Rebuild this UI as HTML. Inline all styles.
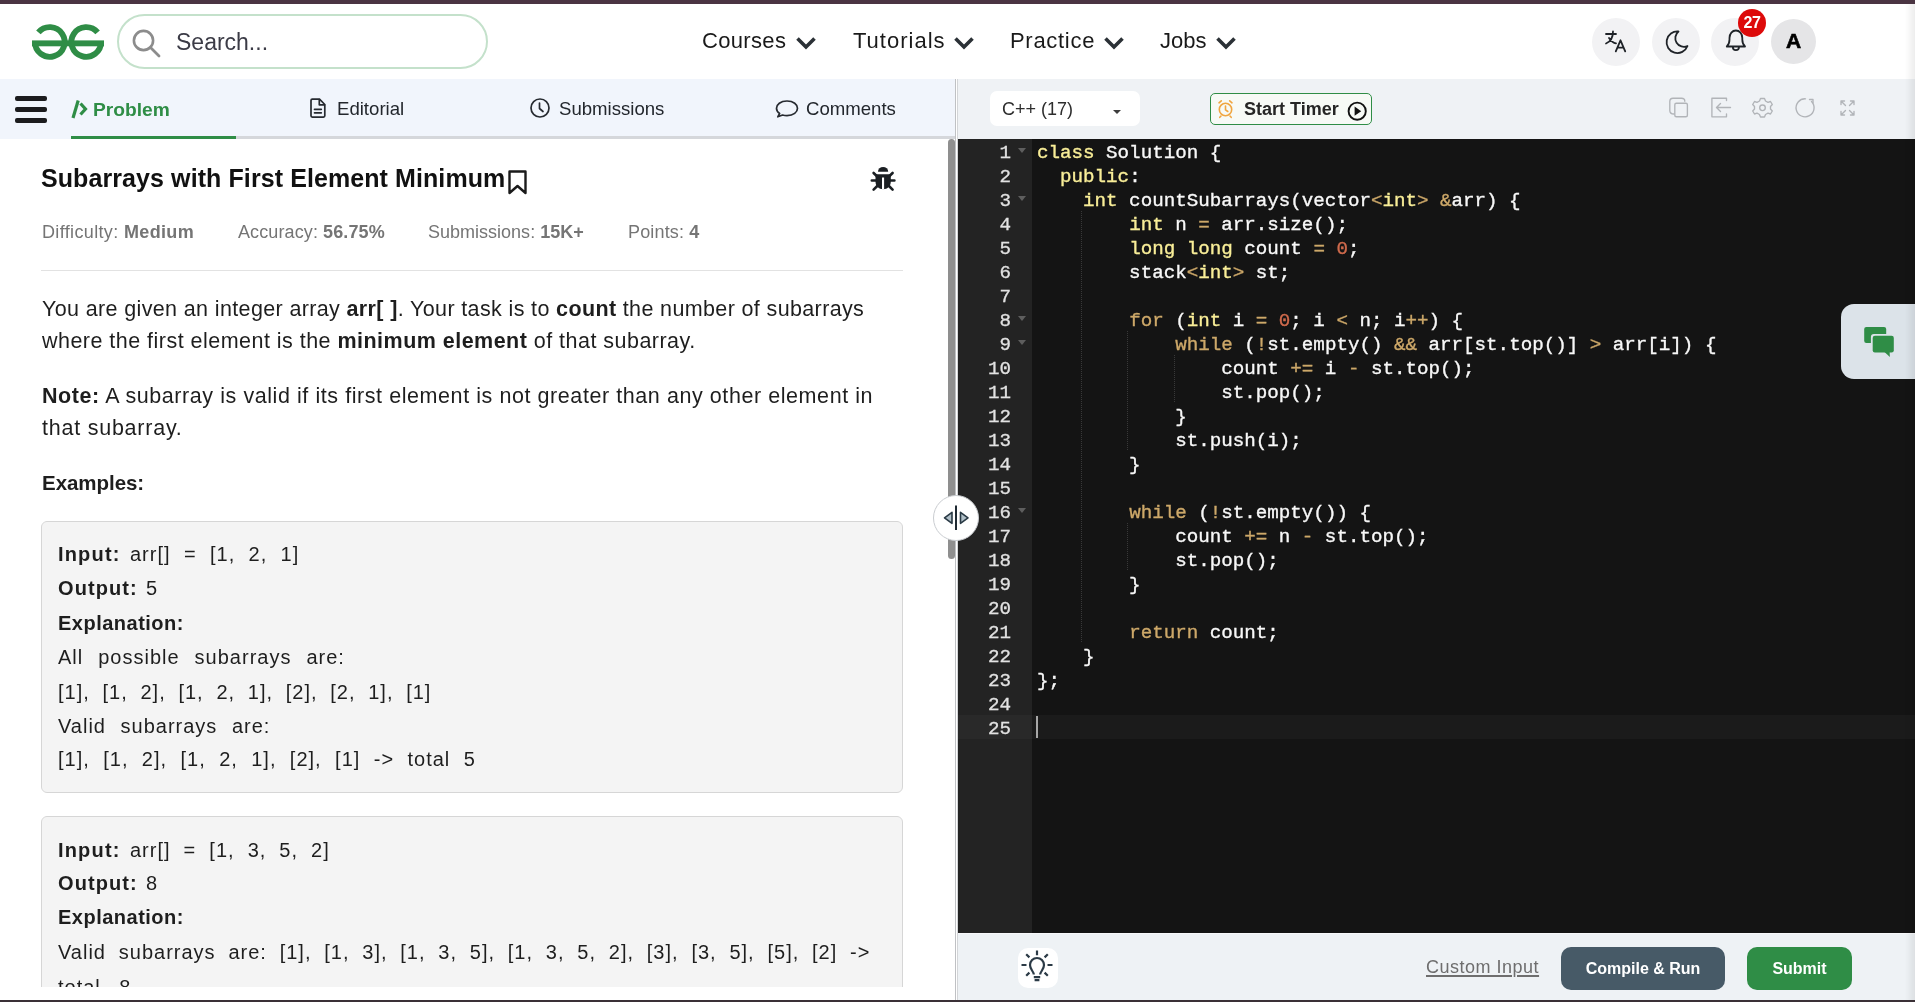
<!DOCTYPE html>
<html><head><meta charset="utf-8">
<style>
*{box-sizing:border-box;margin:0;padding:0}
html,body{width:1915px;height:1002px;overflow:hidden;background:#fff;font-family:"Liberation Sans",sans-serif;color:#1e1e1e}
.abs{position:absolute}
div{will-change:transform}
#topbar{position:absolute;left:0;top:0;width:1915px;height:4px;background:#4a3442}
#header{position:absolute;left:0;top:4px;width:1915px;height:75px;background:#fff}
#search{position:absolute;left:116.5px;top:14px;width:371px;height:55px;border:2.8px solid #c4e1cb;border-radius:28px}
#search .t{position:absolute;left:57px;top:13px;font-size:23px;color:#3b3b46}
.nav{position:absolute;top:28px;font-size:22px;color:#1a1a1a}
.circ{position:absolute;width:48px;height:48px;border-radius:50%;background:#f2f2f4}
/* left tabs */
#ltabs{position:absolute;left:0;top:79px;width:955px;height:60px;background:#f1f5fc}
#ltabs .line{position:absolute;left:71px;top:57px;width:884px;height:3px;background:#d5d7db}
#ltabs .act{position:absolute;left:71px;top:57px;width:165px;height:3px;background:#2f8d46}
.tab{position:absolute;top:18px;font-size:19px;color:#262a30}
/* divider */
#divider{position:absolute;left:955px;top:79px;width:3px;height:923px;background:#fff}
#divider .g{position:absolute;left:0;top:0;width:1px;height:100%;background:#bfc1c4}
#lscroll{position:absolute;left:948px;top:139px;width:7px;height:420px;background:#8f8f8f;border-radius:4px}
/* right toolbar */
#rtool{position:absolute;left:958px;top:79px;width:957px;height:60px;background:#eff2f5}
#sel{position:absolute;left:32px;top:12px;width:150px;height:35px;background:#fff;border-radius:7px}
#timer{position:absolute;left:252px;top:14px;width:162px;height:32px;border:1.2px solid #2f8d46;border-radius:5px;background:#f7faf6}
/* editor */
#editor{position:absolute;left:958px;top:139px;width:957px;height:794px;background:#141414;overflow:hidden}

#gutter{position:absolute;left:0;top:0;width:74px;height:794px;background:#232323}
.ln{position:relative;height:24px;line-height:24px;padding-top:1.5px;text-align:right;padding-right:21px;font-family:"Liberation Mono",monospace;font-size:19.2px;color:#e2e2e2;-webkit-text-stroke:0.3px currentColor}
.fold{position:absolute;left:60px;top:9px;width:0;height:0;border-left:4px solid transparent;border-right:4px solid transparent;border-top:5px solid #5e5e5e}
#code{position:absolute;left:78.5px;top:0;font-family:"Liberation Mono",monospace;font-size:19.2px;color:#f8f8f8;white-space:pre;-webkit-text-stroke:0.35px currentColor}
.cl{height:24px;line-height:24px;padding-top:1.5px}
#activeline{position:absolute;left:0;top:576px;width:957px;height:24px;background:rgba(255,255,255,0.031);z-index:2}
#cursor{position:absolute;left:78px;top:577px;width:2px;height:22px;background:#a7a7a7;z-index:3}
.ig{position:absolute;width:1px;background:repeating-linear-gradient(to bottom,rgba(255,255,255,0.16) 0 1px,transparent 1px 2px)}
.k{color:#cda869}.s{color:#f9ee98}.n{color:#cf6a4c}
/* bottom bar */
#bbar{position:absolute;left:958px;top:933px;width:957px;height:67px;background:#eef2f5}
#bottomline{position:absolute;left:0;top:1000px;width:1915px;height:2px;background:#3a3036}

.L{position:absolute;white-space:pre;line-height:30px;height:30px;color:#1e1e1e}
#lpane{position:absolute;left:0;top:139px;width:948px;height:848px;overflow:hidden;background:#fff}
#lcontent{position:absolute;left:0;top:-139px;width:948px;height:1200px}
.box{position:absolute;left:41px;width:862px;background:#f4f4f4;border:1px solid #d6d6d6;border-radius:6px}
.tabt{position:absolute;font-size:18.6px;color:#23272d;white-space:pre;line-height:30px}
</style></head><body>
<div id="topbar"></div>
<div id="header"></div>
<svg class="abs" style="left:0;top:0" width="130" height="79" viewBox="0 0 130 79">
 <g fill="none" stroke="#2f8d46" stroke-width="5.9">
  <path d="M38.4 32.45 A14.85 14.85 0 1 1 34.95 42"/>
  <path d="M97.6 32.45 A14.85 14.85 0 1 0 101.05 42"/>
 </g>
 <rect x="32" y="40.4" width="72" height="5.9" fill="#2f8d46"/>
</svg>
<div id="search"><svg class="abs" style="left:0;top:0" width="60" height="55" viewBox="119.5 16.5 60 55"><circle cx="144" cy="41" r="9.6" fill="none" stroke="#8c8c8c" stroke-width="2.6"/><path d="M151 48 L159.5 56.5" stroke="#8c8c8c" stroke-width="2.8" stroke-linecap="round"/></svg><div class="t">Search...</div></div>
<div class="nav" style="left:702px;letter-spacing:0.33px">Courses</div>
<div class="nav" style="left:852.5px;letter-spacing:1px">Tutorials</div>
<div class="nav" style="left:1010px;letter-spacing:0.7px">Practice</div>
<div class="nav" style="left:1160px">Jobs</div>
<svg class="abs" style="left:0;top:0;pointer-events:none" width="1915" height="79" viewBox="0 0 1915 79">
 <g fill="none" stroke="#2b3136" stroke-width="3.6" stroke-linecap="butt" stroke-linejoin="miter">
  <path d="M797.5 38.5 L806 47 L814.5 38.5"/>
  <path d="M955.5 38.5 L964 47 L972.5 38.5"/>
  <path d="M1105.5 38.5 L1114 47 L1122.5 38.5"/>
  <path d="M1217.5 38.5 L1226 47 L1234.5 38.5"/>
 </g>
</svg>
<div class="circ" style="left:1592px;top:18px"></div>
<div class="circ" style="left:1652px;top:18px"></div>
<div class="circ" style="left:1711px;top:18px"></div>
<div class="circ" style="left:1771px;top:19px;width:45px;height:45px;background:#e5e5e7"></div>
<div class="abs" style="left:1771px;top:17.5px;width:45px;height:45px;text-align:center;line-height:45px;font-weight:bold;font-size:21px;color:#000;-webkit-text-stroke:0.6px #000">A</div>
<svg class="abs" style="left:0;top:0" width="1915" height="79" viewBox="0 0 1915 79">
 <g fill="none" stroke="#1f2328" stroke-width="1.8" stroke-linecap="round" stroke-linejoin="round">
  <path d="M1606 34 H1616 M1613 31.5 C1613 37 1611 41.5 1606 43.5 M1609 38 C1611 41 1613 43 1616 43.3"/>
  <path d="M1615.8 51.3 L1620.5 40.3 L1625.2 51.3 M1617.5 47.6 H1623.5"/>
  <path d="M1678.5 31.5 A10.8 10.8 0 1 0 1687.5 46 A8.6 8.6 0 0 1 1678.5 31.5 Z"/>
  <path d="M1726.8 46.5 H1745 C1743 44.5 1742.3 42.5 1742.3 39.5 V38 C1742.3 33.5 1739.5 30.5 1735.9 30.5 C1732.3 30.5 1729.5 33.5 1729.5 38 V39.5 C1729.5 42.5 1728.8 44.5 1726.8 46.5 Z M1732.8 47 A3.1 3.1 0 0 0 1739 47"/>
 </g>
</svg>
<div class="abs" style="left:1738px;top:9px;width:28px;height:28px;border-radius:50%;background:#dd0a0a;color:#fff;font-weight:bold;font-size:16px;text-align:center;line-height:28px;letter-spacing:-0.3px">27</div>
<div id="ltabs"><div class="line"></div><div class="act"></div>
<div class="abs" style="left:15px;top:17px;width:32px;height:5px;border-radius:2px;background:#1c1c1e"></div>
<div class="abs" style="left:15px;top:28px;width:32px;height:5px;border-radius:2px;background:#1c1c1e"></div>
<div class="abs" style="left:15px;top:39px;width:32px;height:5px;border-radius:2px;background:#1c1c1e"></div>
<svg class="abs" style="left:0;top:0" width="955" height="57" viewBox="0 79 955 57">
 <g fill="none" stroke="#2f8d46" stroke-width="3.2" stroke-linecap="butt" stroke-linejoin="miter">
  <path d="M78.2 100.5 L73 118"/>
  <path d="M80.5 103.5 L85.5 109 L80.5 114.5"/>
 </g>
 <g fill="none" stroke="#262a30" stroke-width="1.7" stroke-linejoin="round" stroke-linecap="round">
  <path d="M311 100.5 Q311 99.2 312.3 99.2 H319.5 L324.8 104.5 V115.8 Q324.8 117.1 323.5 117.1 H312.3 Q311 117.1 311 115.8 Z"/>
  <path d="M319.3 99.5 V104.8 H324.5"/>
  <path d="M314.5 109.3 H321.3 M314.5 112.8 H321.3"/>
  <circle cx="540" cy="108" r="9"/>
  <path d="M539.5 103 V108.5 L543 111.5"/>
  <path d="M787 101 C780.5 101 776.5 104.5 776.5 108.3 C776.5 110.5 777.8 112.3 779.6 113.5 L777.8 116.8 L782.6 115 C784 115.4 785.5 115.6 787 115.6 C793.5 115.6 797.5 112.2 797.5 108.3 C797.5 104.5 793.5 101 787 101 Z"/>
 </g>
</svg>
<div class="tabt" style="left:93px;top:16px;color:#2f8d46;font-weight:bold;font-size:19.2px">Problem</div>
<div class="tabt" style="left:337px;top:14.8px">Editorial</div>
<div class="tabt" style="left:559px;top:14.8px">Submissions</div>
<div class="tabt" style="left:806px;top:14.8px">Comments</div>
</div>
<div id="divider"><div class="g"></div><div class="abs" style="left:2px;top:0;width:1px;height:100%;background:#d3d5d8"></div></div>
<div id="lpane"><div id="lcontent">
<div class="abs" style="left:41px;top:270px;width:862px;height:1px;background:#e2e2e2"></div>
<div class="box" style="top:521px;height:272px"></div>
<div class="box" style="top:816px;height:300px"></div>
<svg class="abs" style="left:0;top:139px" width="948" height="80" viewBox="0 139 948 80">
 <path d="M509.5 171.5 H525.5 V193 L517.5 186 L509.5 193 Z" fill="none" stroke="#1a1a1a" stroke-width="2.4" stroke-linejoin="round"/>
</svg>
<!--LEFT--><div class="L" style="left:41.0px;top:163.43px;font-size:25px;letter-spacing:0.088px;color:#111"><span id="ln0"><b>Subarrays with First Element Minimum</b></span></div>
<div class="L" style="left:42.0px;top:217.16px;font-size:18px;letter-spacing:0.352px;color:#757575"><span id="ln1">Difficulty: <b>Medium</b></span></div>
<div class="L" style="left:237.6px;top:217.16px;font-size:18px;letter-spacing:0.108px;color:#757575"><span id="ln2">Accuracy: <b>56.75%</b></span></div>
<div class="L" style="left:428.4px;top:217.16px;font-size:18px;letter-spacing:0.008px;color:#757575"><span id="ln3">Submissions: <b>15K+</b></span></div>
<div class="L" style="left:628.1px;top:217.16px;font-size:18px;letter-spacing:0.157px;color:#757575"><span id="ln4">Points: <b>4</b></span></div>
<div class="L" style="left:41.5px;top:294.15px;font-size:21.5px;letter-spacing:0.365px"><span id="ln5">You are given an integer array <b>arr[ ]</b>. Your task is to <b>count</b> the number of subarrays</span></div>
<div class="L" style="left:41.5px;top:325.95px;font-size:21.5px;letter-spacing:0.472px"><span id="ln6">where the first element is the <b>minimum element</b> of that subarray.</span></div>
<div class="L" style="left:41.5px;top:381.05px;font-size:21.5px;letter-spacing:0.570px"><span id="ln7"><b>Note:</b> A subarray is valid if its first element is not greater than any other element in</span></div>
<div class="L" style="left:41.5px;top:413.45px;font-size:21.5px;letter-spacing:0.765px"><span id="ln8">that subarray.</span></div>
<div class="L" style="left:41.5px;top:468.19px;font-size:20.5px;letter-spacing:-0.046px"><span id="ln9"><b>Examples:</b></span></div>
<div class="L" style="left:57.9px;top:538.97px;font-size:20px;letter-spacing:1.174px"><span id="ln10"><b>Input:</b></span></div>
<div class="L" style="left:129.5px;top:538.97px;font-size:20px;letter-spacing:1.000px;word-spacing:6.810px"><span id="ln11">arr[] = [1, 2, 1]</span></div>
<div class="L" style="left:57.9px;top:573.47px;font-size:20px;letter-spacing:1.069px"><span id="ln12"><b>Output:</b></span></div>
<div class="L" style="left:145.9px;top:573.47px;font-size:20px;letter-spacing:1.000px"><span id="ln13">5</span></div>
<div class="L" style="left:57.9px;top:607.87px;font-size:20px;letter-spacing:0.491px"><span id="ln14"><b>Explanation:</b></span></div>
<div class="L" style="left:57.9px;top:642.07px;font-size:20px;letter-spacing:1.000px;word-spacing:8.450px"><span id="ln15">All possible subarrays are:</span></div>
<div class="L" style="left:57.9px;top:676.97px;font-size:20px;letter-spacing:1.000px;word-spacing:6.164px"><span id="ln16">[1], [1, 2], [1, 2, 1], [2], [2, 1], [1]</span></div>
<div class="L" style="left:57.9px;top:710.57px;font-size:20px;letter-spacing:1.000px;word-spacing:8.011px"><span id="ln17">Valid subarrays are:</span></div>
<div class="L" style="left:57.9px;top:744.07px;font-size:20px;letter-spacing:1.000px;word-spacing:6.852px"><span id="ln18">[1], [1, 2], [1, 2, 1], [2], [1] -&gt; total 5</span></div>
<div class="L" style="left:57.9px;top:834.77px;font-size:20px;letter-spacing:1.174px"><span id="ln19"><b>Input:</b></span></div>
<div class="L" style="left:129.5px;top:834.77px;font-size:20px;letter-spacing:1.000px;word-spacing:6.498px"><span id="ln20">arr[] = [1, 3, 5, 2]</span></div>
<div class="L" style="left:57.9px;top:868.07px;font-size:20px;letter-spacing:1.069px"><span id="ln21"><b>Output:</b></span></div>
<div class="L" style="left:145.9px;top:868.07px;font-size:20px;letter-spacing:1.000px"><span id="ln22">8</span></div>
<div class="L" style="left:57.9px;top:902.37px;font-size:20px;letter-spacing:0.491px"><span id="ln23"><b>Explanation:</b></span></div>
<div class="L" style="left:57.9px;top:937.07px;font-size:20px;letter-spacing:1.000px;word-spacing:6.236px"><span id="ln24">Valid subarrays are: [1], [1, 3], [1, 3, 5], [1, 3, 5, 2], [3], [3, 5], [5], [2] -&gt;</span></div>
<div class="L" style="left:57.9px;top:971.57px;font-size:20px;letter-spacing:1.000px;word-spacing:11.913px"><span id="ln25">total 8</span></div><!--/LEFT-->
</div></div>
<div id="lscroll"></div>

<div id="rtool"><div id="sel"><div class="abs" style="left:12px;top:3px;font-size:18px;line-height:30px;color:#2d2d2d;white-space:pre">C++ (17)</div>
<div class="abs" style="left:123px;top:18.5px;width:0;height:0;border-left:4.5px solid transparent;border-right:4.5px solid transparent;border-top:4.5px solid #3c3c3c"></div></div>
<div id="timer"><div class="abs" style="left:33px;top:0px;font-size:18px;line-height:30px;font-weight:bold;color:#262626;white-space:pre">Start Timer</div></div>
<svg class="abs" style="left:0;top:0" width="957" height="60" viewBox="958 79 957 60">
 <g fill="none" stroke="#f0a640" stroke-width="1.6" stroke-linecap="round">
  <circle cx="1225.5" cy="109.5" r="6.2"/>
  <path d="M1225.5 106 V109.8 L1227.8 111.5"/>
  <path d="M1219 102.8 L1221.3 100.8 M1232 102.8 L1229.7 100.8"/>
  <path d="M1221 116 L1219.8 117.3 M1230 116 L1231.2 117.3"/>
 </g>
 <circle cx="1357.2" cy="111.2" r="8.6" fill="none" stroke="#111" stroke-width="1.9"/>
 <path d="M1354.6 106.6 L1361.2 111.2 L1354.6 115.8 Z" fill="#111"/>
 <g fill="none" stroke="#b1b4b8" stroke-width="1.35" stroke-linejoin="round" stroke-linecap="round">
  <path d="M1674 114 Q1669.8 114 1669.8 110.5 V101.5 Q1669.8 98.2 1673 98.2 H1681.5 Q1684.8 98.2 1684.8 101.3"/>
  <rect x="1674.8" y="103.2" width="12.6" height="13.5" rx="1.5"/>
  <path d="M1726.5 100.5 V98.2 H1711.9 V116.8 H1726.5 V114"/>
  <path d="M1730.5 107.5 H1716.6 M1720.5 103.5 L1716.5 107.5 L1720.5 111.5"/>
  <path d="M1760.5 98.5 L1764.5 98.5 L1765.5 101 L1768 102.3 L1770.5 101.5 L1772.3 104.5 L1770.5 106.5 L1770.5 109 L1772.3 111 L1770.5 114 L1768 113.2 L1765.5 114.5 L1764.5 117 L1760.5 117 L1759.5 114.5 L1757 113.2 L1754.5 114 L1752.7 111 L1754.5 109 L1754.5 106.5 L1752.7 104.5 L1754.5 101.5 L1757 102.3 L1759.5 101 Z"/>
  <circle cx="1762.5" cy="107.8" r="2.8"/>
  <path d="M1811.5 101.5 A9 9 0 1 1 1805.5 98.8"/>
  <path d="M1809.5 99.5 H1813 V103"/>
  <path d="M1841.5 101.5 L1845.5 105.5 M1841 101 V104.5 M1841 101 H1844.5"/>
  <path d="M1853.5 101.5 L1849.5 105.5 M1854 101 V104.5 M1854 101 H1850.5"/>
  <path d="M1841.5 114.5 L1845.5 110.5 M1841 115 V111.5 M1841 115 H1844.5"/>
  <path d="M1853.5 114.5 L1849.5 110.5 M1854 115 V111.5 M1854 115 H1850.5"/>
 </g>
</svg>
</div>
<div id="editor"><div id="activeline"></div><div id="gutter"><div class="ln">1<i class="fold"></i></div><div class="ln">2</div><div class="ln">3<i class="fold"></i></div><div class="ln">4</div><div class="ln">5</div><div class="ln">6</div><div class="ln">7</div><div class="ln">8<i class="fold"></i></div><div class="ln">9<i class="fold"></i></div><div class="ln">10</div><div class="ln">11</div><div class="ln">12</div><div class="ln">13</div><div class="ln">14</div><div class="ln">15</div><div class="ln">16<i class="fold"></i></div><div class="ln">17</div><div class="ln">18</div><div class="ln">19</div><div class="ln">20</div><div class="ln">21</div><div class="ln">22</div><div class="ln">23</div><div class="ln">24</div><div class="ln">25</div></div><div id="code"><div class="cl"><span class="s">class</span> Solution {</div><div class="cl">  <span class="s">public</span>:</div><div class="cl">    <span class="s">int</span> countSubarrays(vector<span class="k">&lt;</span><span class="s">int</span><span class="k">&gt;</span> <span class="k">&amp;</span>arr) {</div><div class="cl">        <span class="s">int</span> n <span class="k">=</span> arr.size();</div><div class="cl">        <span class="s">long</span> <span class="s">long</span> count <span class="k">=</span> <span class="n">0</span>;</div><div class="cl">        stack<span class="k">&lt;</span><span class="s">int</span><span class="k">&gt;</span> st;</div><div class="cl"> </div><div class="cl">        <span class="k">for</span> (<span class="s">int</span> i <span class="k">=</span> <span class="n">0</span>; i <span class="k">&lt;</span> n; i<span class="k">++</span>) {</div><div class="cl">            <span class="k">while</span> (<span class="k">!</span>st.empty() <span class="k">&amp;&amp;</span> arr[st.top()] <span class="k">&gt;</span> arr[i]) {</div><div class="cl">                count <span class="k">+=</span> i <span class="k">-</span> st.top();</div><div class="cl">                st.pop();</div><div class="cl">            }</div><div class="cl">            st.push(i);</div><div class="cl">        }</div><div class="cl"> </div><div class="cl">        <span class="k">while</span> (<span class="k">!</span>st.empty()) {</div><div class="cl">            count <span class="k">+=</span> n <span class="k">-</span> st.top();</div><div class="cl">            st.pop();</div><div class="cl">        }</div><div class="cl"> </div><div class="cl">        <span class="k">return</span> count;</div><div class="cl">    }</div><div class="cl">};</div><div class="cl"> </div><div class="cl"> </div></div><div class="ig" style="left:123px;top:72px;height:432px"></div><div class="ig" style="left:169px;top:192px;height:120px"></div><div class="ig" style="left:169px;top:384px;height:48px"></div><div class="ig" style="left:216px;top:216px;height:48px"></div><div id="cursor"></div></div>
<div id="bbar">
<div class="abs" style="left:0;top:0;width:957px;height:1px;background:#f7f8fa"></div>
<div class="abs" style="left:60px;top:15px;width:40px;height:40px;border-radius:10px;background:#fff"></div>
<svg class="abs" style="left:0;top:0" width="957" height="67" viewBox="958 933 957 67">
 <g fill="none" stroke="#2b3a46" stroke-width="2.2" stroke-linecap="butt">
  <path d="M1033.8 974.5 C1033.8 971.5 1030 969.5 1030 965 A7 7 0 0 1 1044 965 C1044 969.5 1040.2 971.5 1040.2 974.5"/>
  <path d="M1033.8 977.2 H1040.2 M1034.6 980.2 H1039.4"/>
  <path d="M1037 950.5 V955.3 M1021.5 965 H1026.5 M1047.5 965 H1052.5 M1026.2 954.2 L1029.4 957.4 M1047.8 954.2 L1044.6 957.4 M1026.2 975.8 L1029.4 972.6 M1047.8 975.8 L1044.6 972.6"/>
 </g>
</svg>
<div class="abs" style="left:468px;top:19px;font-size:18px;letter-spacing:0.5px;line-height:30px;color:#6e6e6e;text-decoration:underline;text-decoration-thickness:1.5px;text-underline-offset:1.5px;white-space:pre">Custom Input</div>
<div class="abs" style="left:603px;top:14px;width:164px;height:43px;border-radius:10px;background:#475a67;color:#fff;font-weight:bold;font-size:16px;line-height:44px;text-align:center">Compile &amp; Run</div>
<div class="abs" style="left:789px;top:14px;width:105px;height:43px;border-radius:10px;background:#2f8d46;color:#fff;font-weight:bold;font-size:16px;line-height:44px;text-align:center">Submit</div>
</div>
<svg class="abs" style="left:858px;top:155px" width="50" height="50" viewBox="858 155 50 50">
 <g fill="#1b1f23">
  <path d="M878 171.7 A5.1 4.8 0 0 1 888.2 171.7 Z"/>
  <path d="M875.5 174.2 H890.8 V181.5 C890.8 186.2 887.5 189.2 883.15 189.2 C878.8 189.2 875.5 186.2 875.5 181.5 Z"/>
 </g>
 <rect x="882" y="177.5" width="2.1" height="12" fill="#fff"/>
 <g fill="none" stroke="#1b1f23" stroke-width="2.6" stroke-linecap="round">
  <path d="M873.6 173 L877.5 176.8 M892.6 173 L888.7 176.8 M871.8 180.5 H876 M894.4 180.5 H890.2 M873.6 189.6 L877.5 185.8 M892.6 189.6 L888.7 185.8"/>
 </g>
</svg>
<div class="abs" style="left:933px;top:495px;width:46px;height:46px;border-radius:50%;background:#fff;border:1.5px solid #c9ccd0"></div>
<svg class="abs" style="left:933px;top:495px" width="46" height="46" viewBox="933 495 46 46">
 <path d="M956 505.5 V530" stroke="#1f2a33" stroke-width="2" />
 <path d="M952 512.3 L944.5 517.8 L952 523.3 Z M960.5 512.3 L968 517.8 L960.5 523.3 Z" fill="#b0bfc8" stroke="#2a3a45" stroke-width="1.6" stroke-linejoin="round"/>
</svg>
<div class="abs" style="left:1841px;top:304px;width:95px;height:75px;border-radius:13px;background:#dce3e9"></div>
<svg class="abs" style="left:1841px;top:304px" width="74" height="75" viewBox="1841 304 74 75">
 <rect x="1864.2" y="326.9" width="22" height="16.1" rx="2.2" fill="#2f8d46"/>
 <rect x="1870.9" y="334" width="24.7" height="20.2" rx="3" fill="#dce3e9"/>
 <rect x="1872.7" y="335.8" width="21.1" height="16.6" rx="2.2" fill="#2f8d46"/>
 <path d="M1884.5 352 L1889.9 357 L1889.6 352 Z" fill="#2f8d46"/>
</svg>
<div class="abs" style="left:1905px;top:4px;width:10px;height:996px;background:linear-gradient(to right,rgba(0,0,0,0),rgba(0,0,0,0.07))"></div>
<div id="bottomline"></div>
</body></html>
